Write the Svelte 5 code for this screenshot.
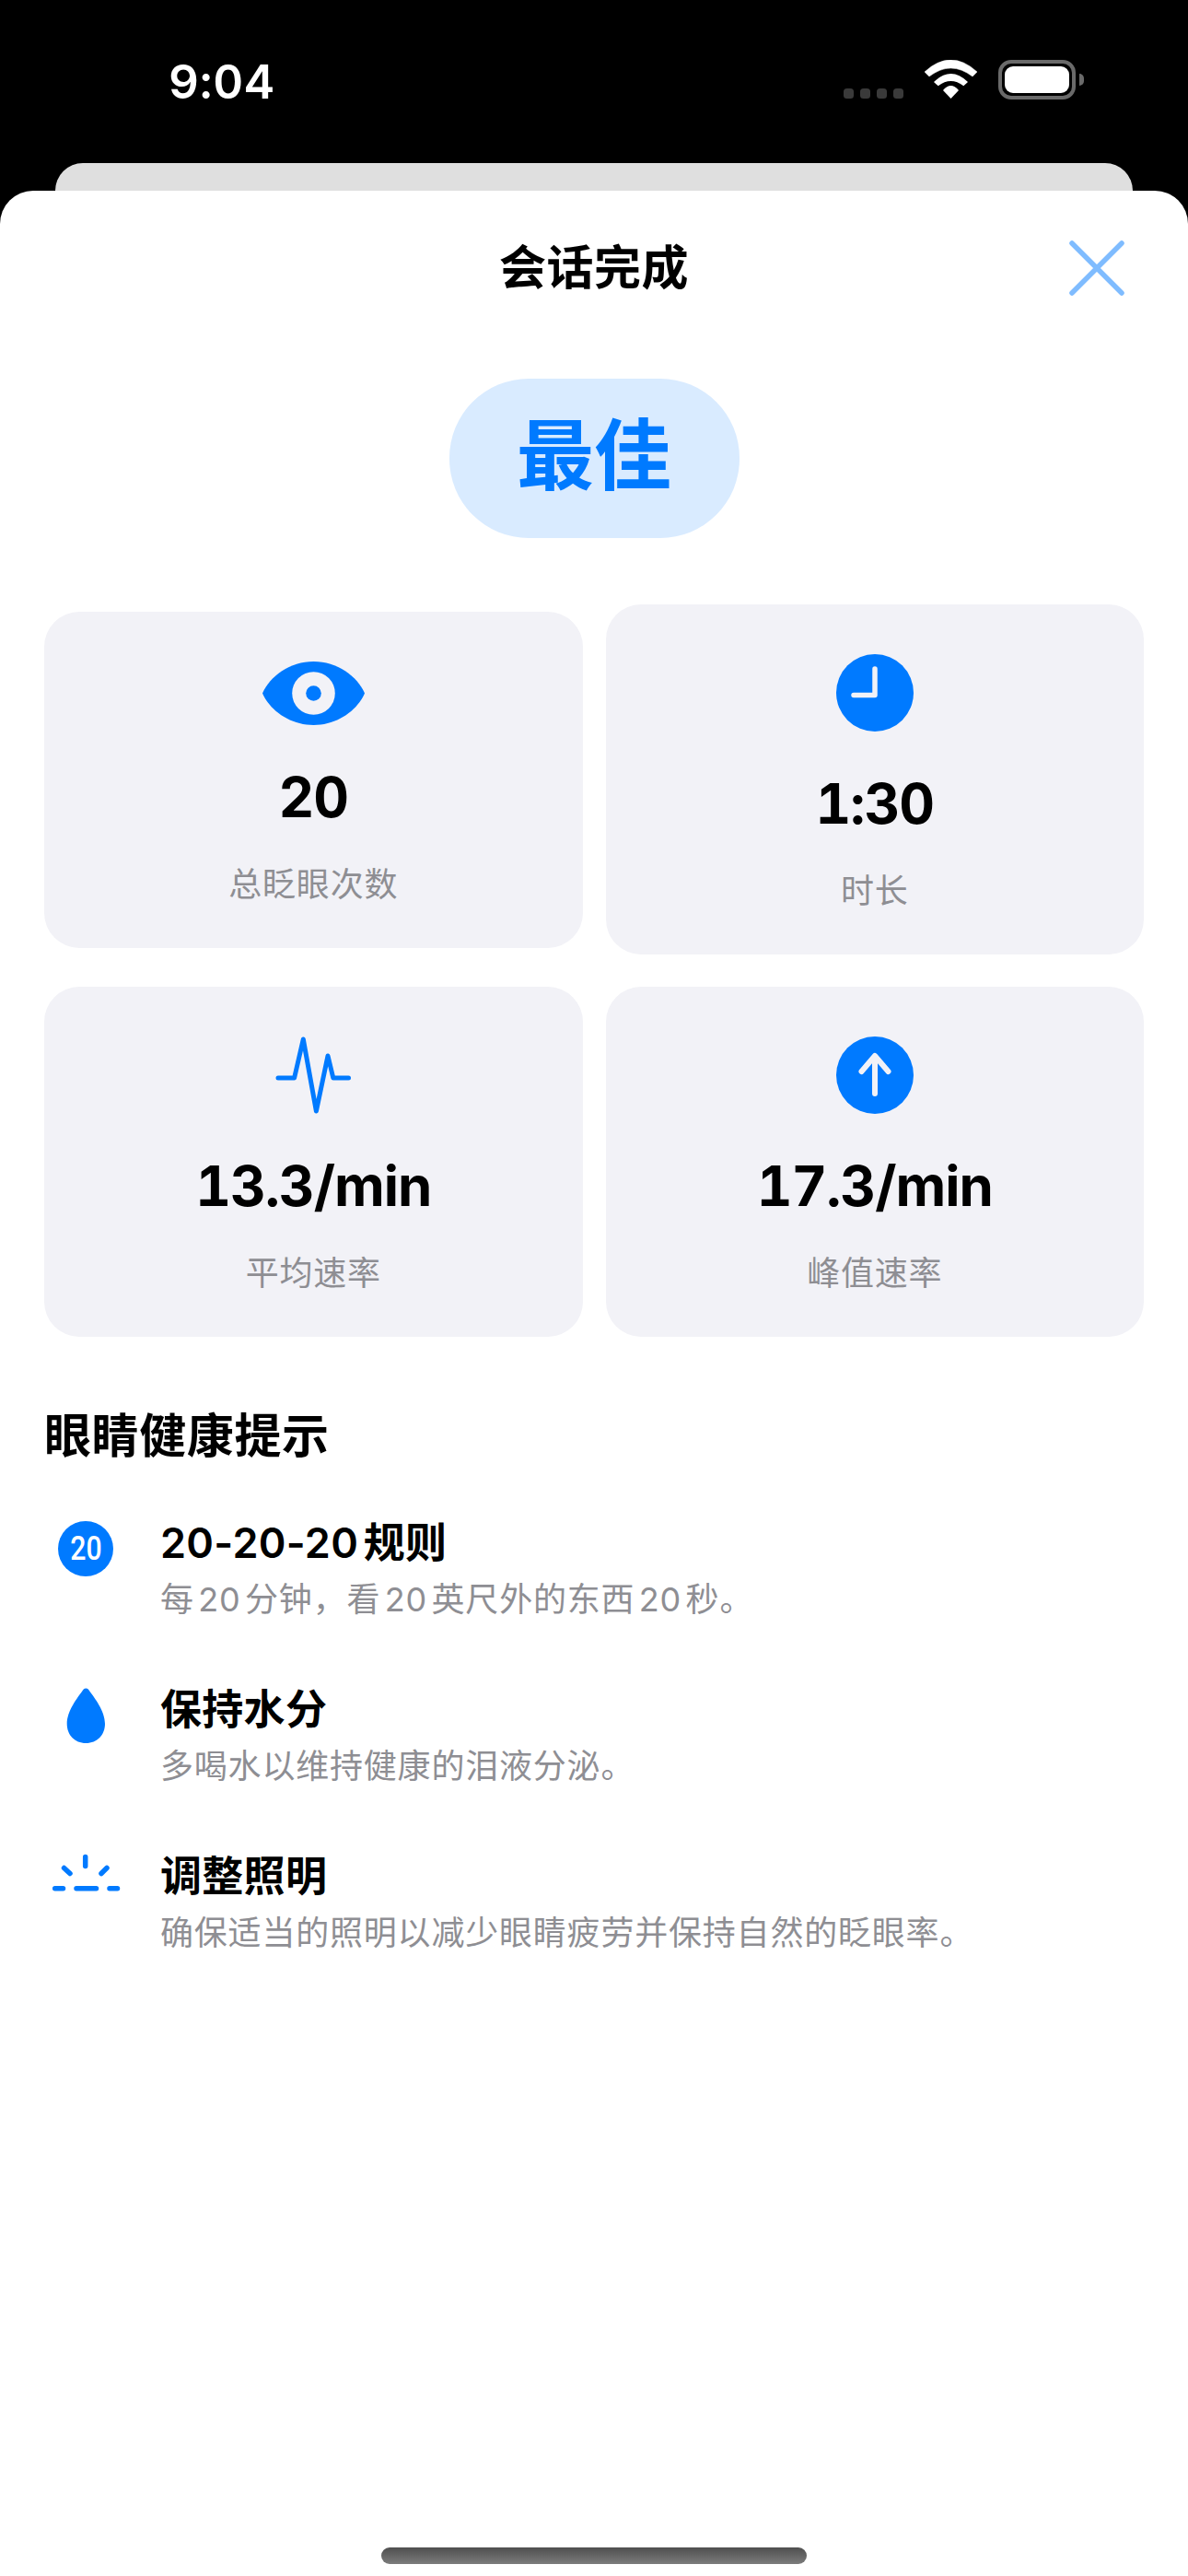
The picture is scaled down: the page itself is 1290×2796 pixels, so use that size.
<script>
  const blue = "#007AFF";
</script>

<div class="screen">
  <div class="status">
    <span class="time">9:04</span>
    <div class="status-icons">
      <div class="dots"><i></i><i></i><i></i><i></i></div>
      <svg width="57" height="43" viewBox="0 0 57 43" fill="#fff">
        <path d="M0 13Q28.5-13 57 13L52 18Q28.5 0 5 18Z" stroke="#fff" stroke-width=".5" stroke-linejoin="round"/>
        <path d="M10 24Q28.5 6 47 24L42.3 28.3Q28.5 17.7 14.7 28.3Z"/>
        <path d="M20 33Q28.5 23 37 33L28.5 42Z"/>
      </svg>
      <div class="battery"><span class="level"></span><span class="nub"></span></div>
    </div>
  </div>

  <div class="back-sheet"></div>

  <div class="sheet">
    <div class="header">
      <span></span>
      <h1>会话完成</h1>
      <button class="close" aria-label="关闭">
        <svg width="60" height="60" viewBox="0 0 60 60" fill="none" stroke="#7FBCFF" stroke-width="5.5" stroke-linecap="round">
          <path d="M3 3L57 57M57 3L3 57"/>
        </svg>
      </button>
    </div>

    <div class="badge"><span>最佳</span></div>

    <div class="stats">
      <div class="card">
        <svg width="111" height="69" viewBox="0 0 111 69">
          <path fill={blue} d="M0 34.5C8 16 30 0 55.5 0S103 16 111 34.5C103 53 81 69 55.5 69S8 53 0 34.5Z"/>
          <circle cx="55.5" cy="34.5" r="23.3" fill="#F2F2F7"/>
          <circle cx="55.5" cy="34.5" r="8.3" fill={blue}/>
        </svg>
        <div class="value">20</div>
        <div class="label">总眨眼次数</div>
      </div>
      <div class="card">
        <svg width="84" height="84" viewBox="0 0 84 84">
          <circle cx="42" cy="42" r="42" fill={blue}/>
          <path d="M42 16V44.5H19" fill="none" stroke="#F2F2F7" stroke-width="5.5" stroke-linecap="round" stroke-linejoin="round"/>
        </svg>
        <div class="value">1:30</div>
        <div class="label">时长</div>
      </div>
      <div class="card">
        <svg width="84" height="84" viewBox="0 0 84 84">
          <path d="M4 45H21.6L31.3 3L45.4 81L58 21L63.8 45H80.5" fill="none" stroke={blue} stroke-width="5" stroke-linecap="round" stroke-linejoin="round"/>
        </svg>
        <div class="value">13.3/min</div>
        <div class="label">平均速率</div>
      </div>
      <div class="card">
        <svg width="84" height="84" viewBox="0 0 84 84">
          <circle cx="42" cy="42" r="42" fill={blue}/>
          <path d="M42 62V22M27.5 38L42 21L56.5 38" fill="none" stroke="#F2F2F7" stroke-width="6" stroke-linecap="round" stroke-linejoin="round"/>
        </svg>
        <div class="value">17.3/min</div>
        <div class="label">峰值速率</div>
      </div>
    </div>

    <h2>眼睛健康提示</h2>

    <div class="tips">
      <div class="tip">
        <div class="tip-icon"><div class="num-circle"><span>20</span></div></div>
        <div>
          <div class="tip-title">20-20-20规则</div>
          <div class="tip-text">每20分钟&#xFF0C;看20英尺外的东西20秒。</div>
        </div>
      </div>
      <div class="tip">
        <div class="tip-icon">
          <svg width="90" height="72" viewBox="0 0 90 72">
            <path fill={blue} d="M45.3 6.5C43.8 6.5 42.8 7.3 42 8.5C36 17 24.7 31 24.7 45C24.7 57 33 66 45.3 66C57.7 66 66 57 66 45C66 31 54.6 17 48.6 8.5C47.8 7.3 46.8 6.5 45.3 6.5Z"/>
          </svg>
        </div>
        <div>
          <div class="tip-title">保持水分</div>
          <div class="tip-text">多喝水以维持健康的泪液分泌。</div>
        </div>
      </div>
      <div class="tip">
        <div class="tip-icon">
          <svg width="90" height="72" viewBox="0 0 90 72">
            <path fill="none" stroke={blue} stroke-width="5.5" stroke-linecap="round" d="M44.7 8.5V18.5M21.5 20.5L28 26.5M68 20.5L62 26.5M11.7 42.7H20.5M35 42.7H56.5M71 42.7H79.5"/>
          </svg>
        </div>
        <div>
          <div class="tip-title">调整照明</div>
          <div class="tip-text">确保适当的照明以减少眼睛疲劳并保持自然的眨眼率。</div>
        </div>
      </div>
    </div>

    <div class="home-bar"></div>
  </div>
</div>

<style>
  :global(body) {
    background: #000;
  }
  .screen {
    width: 1290px;
    height: 2796px;
    display: flex;
    flex-direction: column;
    background: #000;
    font-family: Inter, "Noto Sans CJK SC", sans-serif;
    text-autospace: normal;
    overflow: hidden;
  }
  .status {
    height: 177px;
    box-sizing: border-box;
    padding: 65px 113px 0 183px;
    display: flex;
    justify-content: space-between;
    align-items: flex-start;
    color: #fff;
  }
  .time {
    font-size: 51px;
    font-weight: 600;
    line-height: 51px;
    margin-top: -2px;
    letter-spacing: .8px;
    font-variant-numeric: tabular-nums;
  }
  .status-icons {
    display: flex;
    gap: 23px;
    align-items: flex-end;
  }
  .dots {
    display: flex;
    gap: 7px;
    margin-bottom: 1px;
  }
  .dots i {
    width: 11px;
    height: 11px;
    border-radius: 3.5px;
    background: #3a3a3a;
  }
  .battery {
    position: relative;
    width: 84px;
    height: 43px;
    box-sizing: border-box;
    border: 4px solid #6a6a6a;
    border-radius: 14px;
    margin-right: 9px;
    padding: 3px;
  }
  .level {
    display: block;
    height: 100%;
    background: #fff;
    border-radius: 9px;
  }
  .nub {
    position: absolute;
    right: -13px;
    top: 11px;
    width: 5px;
    height: 13px;
    background: #6a6a6a;
    border-radius: 0 5px 5px 0;
  }
  .back-sheet {
    height: 30px;
    margin: 0 60px;
    background: #dfdfdf;
    border-radius: 30px 30px 0 0;
  }
  .sheet {
    flex: 1;
    display: flex;
    flex-direction: column;
    background: #fff;
    border-radius: 36px 36px 0 0;
    padding-top: 48px;
  }
  .header {
    display: grid;
    grid-template-columns: 1fr auto 1fr;
    align-items: center;
    height: 72px;
  }
  h1 {
    margin: 0;
    font-size: 51px;
    font-weight: 600;
    line-height: 72px;
    letter-spacing: .5px;
    color: #000;
  }
  .close {
    justify-self: end;
    margin-right: 69px;
    padding: 0;
    border: none;
    background: none;
    height: 60px;
  }
  .badge {
    align-self: center;
    margin-top: 84px;
    width: 315px;
    height: 173px;
    display: flex;
    align-items: center;
    justify-content: center;
    background: #D9EBFF;
    border-radius: 86px;
    color: #007AFF;
    font-size: 84px;
    font-weight: 700;
  }
  .badge span {
    line-height: 84px;
    margin-top: -6px;
  }
  .stats {
    margin: 72px 48px 0;
    display: grid;
    grid-template-columns: 1fr 1fr;
    gap: 35px 25px;
    align-items: center;
  }
  .card {
    display: flex;
    flex-direction: column;
    align-items: center;
    background: #F2F2F7;
    border-radius: 38px;
    padding: 54px 0 47px;
  }
  .card svg {
    display: block;
  }
  .value {
    margin-top: 42px;
    font-size: 60px;
    font-weight: 700;
    line-height: 73px;
    letter-spacing: -1px;
    color: #000;
    font-variant-numeric: tabular-nums;
  }
  .label {
    margin-top: 36px;
    font-size: 36px;
    line-height: 44px;
    letter-spacing: .8px;
    color: #8E8E93;
  }
  h2 {
    margin: 72px 48px 0;
    font-size: 51px;
    font-weight: 600;
    line-height: 72px;
    letter-spacing: .6px;
    color: #000;
  }
  .tips {
    margin: 50px 0 0 48px;
    display: flex;
    flex-direction: column;
    gap: 66px;
  }
  .tip {
    display: flex;
    gap: 36px;
  }
  .tip-icon {
    width: 90px;
    height: 72px;
    flex: none;
    display: flex;
    align-items: center;
    justify-content: center;
  }
  .num-circle {
    width: 60px;
    height: 60px;
    border-radius: 50%;
    background: #007AFF;
    color: #fff;
    display: flex;
    align-items: center;
    justify-content: center;
    font-family: Roboto, sans-serif;
    font-size: 36px;
    font-weight: 500;
  }
  .num-circle span {
    display: block;
    transform: scaleX(.84);
  }
  .tip-title {
    font-size: 45px;
    font-weight: 600;
    line-height: 60px;
    letter-spacing: .3px;
    color: #000;
  }
  .tip-text {
    margin-top: 7px;
    font-size: 36px;
    line-height: 48px;
    letter-spacing: .8px;
    color: #8E8E93;
  }
  .home-bar {
    align-self: center;
    width: 462px;
    height: 18px;
    margin-top: auto;
    margin-bottom: 13px;
    border-radius: 9px;
    background: linear-gradient(#4f4f4f, #7c7c7c);
  }
</style>
